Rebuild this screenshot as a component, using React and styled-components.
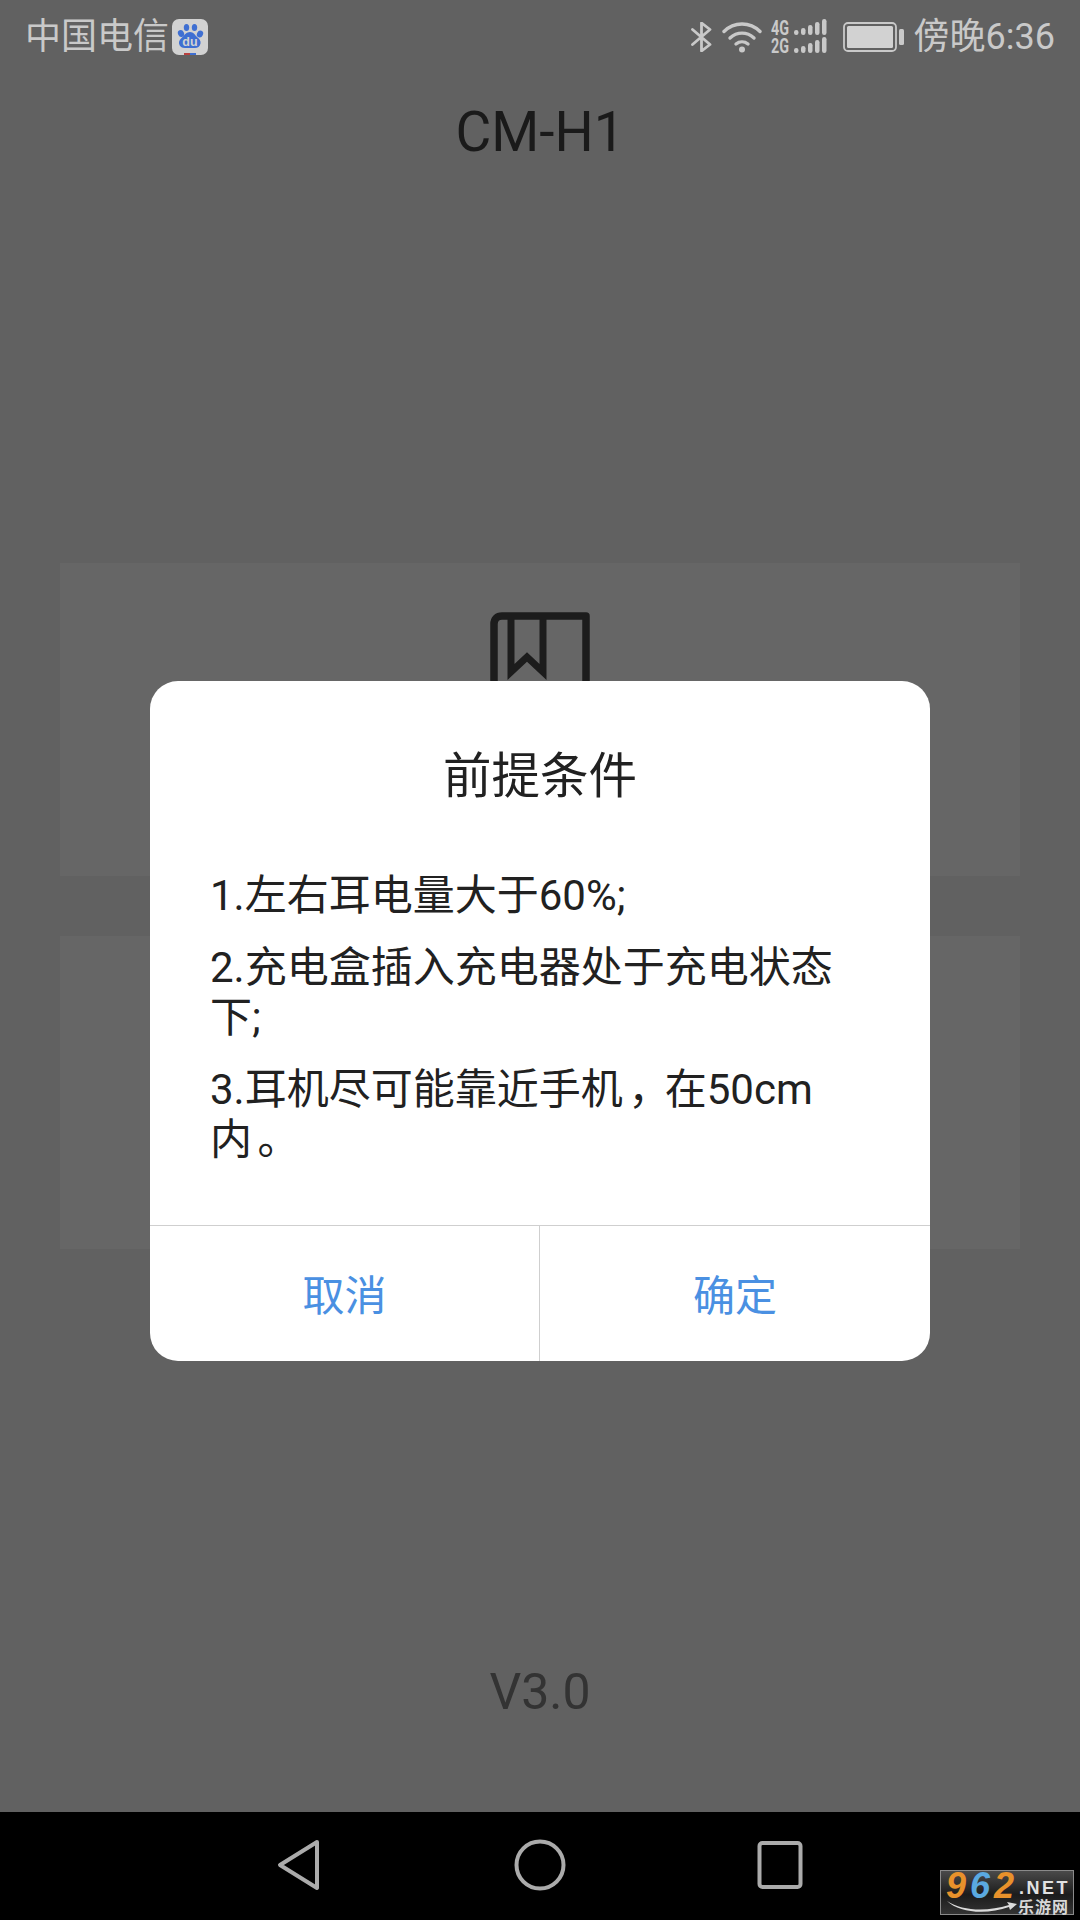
import styled, { createGlobalStyle } from 'styled-components';

const GlobalStyle = createGlobalStyle`
  html, body {
    margin: 0;
    padding: 0;
    background: #616161;
  }
  * {
    box-sizing: border-box;
  }
`;

const fontStack = `Roboto, "Noto Sans CJK SC", sans-serif`;

const Page = styled.div`
  position: relative;
  width: 1080px;
  height: 1920px;
  overflow: hidden;
  display: flex;
  flex-direction: column;
  background: #616161;
  font-family: ${fontStack};
`;

const StatusBar = styled.div`
  height: 72px;
  display: flex;
  align-items: center;
  justify-content: space-between;
  padding: 2px 25px 0 25px;
  color: #c9c9c9;
  font-size: 36px;
  flex-shrink: 0;
`;

const StatusGroup = styled.div`
  display: flex;
  align-items: center;
`;

const Carrier = styled.span`
  margin-right: 3px;
  line-height: 60px;
`;

const Clock = styled.span`
  margin-left: 10px;
  line-height: 60px;
`;

const StatusIcon = styled.svg`
  display: block;
  margin-left: ${(p) => p.$gap || 0}px;
`;

const Header = styled.h1`
  margin: 0;
  height: 118px;
  padding-top: 2px;
  display: flex;
  align-items: center;
  justify-content: center;
  font-size: 55px;
  font-weight: 400;
  color: #1a1a1a;
  flex-shrink: 0;
`;

const Main = styled.main`
  flex: 1;
  display: flex;
  flex-direction: column;
  align-items: center;
  padding: 373px 60px 0;
`;

const Card = styled.div`
  width: 100%;
  height: 313px;
  margin-bottom: 60px;
  padding-top: 49px;
  display: flex;
  justify-content: center;
  background: #666666;
`;

const Version = styled.div`
  margin-top: 60px;
  font-size: 50px;
  line-height: 60px;
  padding-top: 293px;
  color: #333333;
`;

const NavBar = styled.nav`
  height: 108px;
  flex-shrink: 0;
  background: #000;
  display: flex;
  align-items: flex-start;
  justify-content: center;
  padding-top: 27px;
`;

const NavButton = styled.svg`
  display: block;
  margin-left: ${(p) => p.$gap || 0}px;
`;

const Dialog = styled.section`
  position: absolute;
  left: 150px;
  top: 681px;
  width: 780px;
  height: 680px;
  border-radius: 28px;
  background: #fff;
  display: flex;
  flex-direction: column;
  overflow: hidden;
`;

const DialogTitle = styled.h2`
  margin: 0;
  padding-top: 66px;
  font-size: 48.5px;
  line-height: 60px;
  font-weight: 400;
  text-align: center;
  color: #212121;
`;

const DialogBody = styled.div`
  flex: 1;
  padding: 64px 58px 0 60px;
`;

const Line = styled.p`
  margin: 0 0 22px;
  font-size: 42px;
  line-height: 50px;
  color: #212121;
`;

// the reference sits its full-width punctuation further into the cell
const Punct = styled.span`
  padding-left: 5.5px;
  letter-spacing: -5.5px;
`;

const DialogActions = styled.div`
  height: 136px;
  display: grid;
  grid-template-columns: 389px 391px;
  border-top: 1px solid #cfcfcf;
`;

const ActionButton = styled.button`
  border: none;
  border-left: ${(p) => (p.$divided ? '1px solid #cfcfcf' : 'none')};
  background: transparent;
  padding: 0 0 2px;
  font-family: ${fontStack};
  font-size: 42px;
  color: #4a90e2;
`;

const Watermark = styled.div`
  position: absolute;
  left: 940px;
  top: 1870px;
  width: 134px;
  height: 45px;
  border: 1px solid #8a8a8a;
  background: linear-gradient(#4a4a4a, #1c1c1c 55%, #333);
`;

const MarkDigits = styled.span`
  position: absolute;
  left: 5px;
  top: 1px;
  font-family: "Liberation Sans", sans-serif;
  font-size: 36px;
  line-height: 28px;
  font-weight: 700;
  font-style: italic;
  letter-spacing: 4px;
`;

const MarkDigit = styled.span`
  color: ${(p) => p.$color};
`;

const MarkNet = styled.span`
  position: absolute;
  left: 78px;
  top: 8px;
  font-family: "Liberation Sans", sans-serif;
  font-size: 18px;
  line-height: 18px;
  font-weight: 700;
  letter-spacing: 2.5px;
  color: #e2e2e2;
`;

const MarkName = styled.span`
  position: absolute;
  left: 77px;
  top: 27px;
  font-family: "Noto Sans CJK SC", sans-serif;
  font-size: 16px;
  line-height: 16px;
  font-weight: 700;
  letter-spacing: 1px;
  color: #d8d8d8;
`;

const MarkSwoosh = styled.svg`
  position: absolute;
  left: 6px;
  top: 29px;
`;

const BaiduIcon = () => (
  <StatusIcon width="36" height="36" viewBox="0 0 36 36">
    <rect width="36" height="36" rx="7" fill="#d2d2d2" />
    <g fill="#3f6fd2">
      <ellipse cx="9" cy="14.5" rx="3" ry="3.6" transform="rotate(-25 9 14.5)" />
      <ellipse cx="14.5" cy="8.5" rx="2.7" ry="3.6" />
      <ellipse cx="22.5" cy="8.5" rx="2.7" ry="3.6" />
      <ellipse cx="28" cy="15" rx="3" ry="3.6" transform="rotate(25 28 15)" />
      <path d="M18 13c3.500 0 5 3 7 5 2.500 2 4 4 3.500 6.500-.5 3-3 4.500-5.500 4.500H13c-3 0-5.500-1.500-6-4.500C6.500 22 8.500 20 10.500 18c2-2 4-5 7.500-5z" />
    </g>
    <text x="18" y="27" textAnchor="middle" fontFamily="Liberation Sans, sans-serif" fontSize="12.500" fontWeight="700" fill="#d2d2d2">
      du
    </text>
    <rect x="12" y="34" width="6" height="2" fill="#b8403f" />
    <rect x="18" y="34" width="6" height="2" fill="#3f6fd2" />
  </StatusIcon>
);

const BluetoothIcon = () => (
  <StatusIcon width="22" height="30" viewBox="0 0 22 30">
    <path
      d="M1.500 7.500 19 22.500 10.500 29V1L19 7.500 1.500 22.500"
      fill="none"
      stroke="#c9c9c9"
      strokeWidth="2.800"
      strokeLinecap="round"
      strokeLinejoin="round"
    />
  </StatusIcon>
);

const WifiIcon = () => (
  <StatusIcon $gap={9} width="40" height="32" viewBox="0 0 40 32">
    <g fill="none" stroke="#c9c9c9" strokeWidth="3.400" strokeLinecap="round">
      <path d="M2 10.500C12 .5 28 .5 38 10.500" />
      <path d="M8 17c7-6.500 17-6.500 24 0" />
      <path d="M14 23c3.500-2.800 8.500-2.800 12 0" />
    </g>
    <circle cx="20" cy="28.500" r="3" fill="#c9c9c9" />
  </StatusIcon>
);

const signalBars = [
  [23, 5],
  [30, 7],
  [37, 10],
  [44, 13],
  [51, 16],
];

const SignalRow = ({ label, y }) => (
  <g>
    <text x="0" y={y + 15} fontFamily="Roboto, sans-serif" fontSize="20" fontWeight="700" fill="#c9c9c9" textLength="18" lengthAdjust="spacingAndGlyphs">
      {label}
    </text>
    {signalBars.map(([x, h]) => (
      <rect key={x} x={x} y={y + 15 - h} width="4.500" height={h} rx="2.200" fill="#c9c9c9" />
    ))}
  </g>
);

const SignalIcon = () => (
  <StatusIcon $gap={9} width="58" height="43" viewBox="0 -4 58 43">
    <SignalRow label="4G" y={0} />
    <SignalRow label="2G" y={18} />
  </StatusIcon>
);

const BatteryIcon = () => (
  <StatusIcon $gap={14} width="61" height="30" viewBox="0 0 61 30">
    <rect x="1" y="1" width="52" height="28" rx="4" fill="none" stroke="#c9c9c9" strokeWidth="1.800" />
    <rect x="4" y="4" width="46" height="22" rx="1.500" fill="#d2d2d2" />
    <rect x="56" y="7" width="5" height="16" rx="1.500" fill="#c9c9c9" />
  </StatusIcon>
);

const BookIcon = () => (
  <svg width="100" height="130" viewBox="0 0 100 130">
    <path
      d="M12 4H96V126H4V12C4 7 7 4 12 4Z"
      fill="none"
      stroke="#1c1c1c"
      strokeWidth="7.500"
      strokeLinejoin="round"
    />
    <path
      d="M21 6V60L37 45 53 60V6"
      fill="none"
      stroke="#1c1c1c"
      strokeWidth="7"
      strokeLinejoin="miter"
    />
  </svg>
);

function App() {
  return (
    <Page>
      <GlobalStyle />
      <StatusBar>
        <StatusGroup>
          <Carrier>中国电信</Carrier>
          <BaiduIcon />
        </StatusGroup>
        <StatusGroup>
          <BluetoothIcon />
          <WifiIcon />
          <SignalIcon />
          <BatteryIcon />
          <Clock>傍晚6:36</Clock>
        </StatusGroup>
      </StatusBar>
      <Header>CM-H1</Header>
      <Main>
        <Card>
          <BookIcon />
        </Card>
        <Card />
        <Version>V3.0</Version>
      </Main>
      <NavBar>
        <NavButton width="44" height="52" viewBox="0 0 44 52">
          <path d="M40 3 3 26 40 49Z" fill="none" stroke="#ababab" strokeWidth="4" strokeLinejoin="round" />
        </NavButton>
        <NavButton $gap={193} width="52" height="52" viewBox="0 0 52 52">
          <circle cx="26" cy="26" r="23.500" fill="none" stroke="#ababab" strokeWidth="4" />
        </NavButton>
        <NavButton $gap={190} width="48" height="52" viewBox="0 0 48 52">
          <rect x="3.500" y="4" width="41" height="44" rx="3" fill="none" stroke="#ababab" strokeWidth="4" />
        </NavButton>
      </NavBar>
      <Dialog>
        <DialogTitle>前提条件</DialogTitle>
        <DialogBody>
          <Line>1.左右耳电量大于60%;</Line>
          <Line>2.充电盒插入充电器处于充电状态下;</Line>
          <Line>
            3.耳机尽可能靠近手机<Punct>，</Punct>在50cm内<Punct>。</Punct>
          </Line>
        </DialogBody>
        <DialogActions>
          <ActionButton>取消</ActionButton>
          <ActionButton $divided>确定</ActionButton>
        </DialogActions>
      </Dialog>
      <Watermark>
        <MarkDigits>
          <MarkDigit $color="#e8912b">9</MarkDigit>
          <MarkDigit $color="#5aa9e0">6</MarkDigit>
          <MarkDigit $color="#e8912b">2</MarkDigit>
        </MarkDigits>
        <MarkNet>.NET</MarkNet>
        <MarkName>乐游网</MarkName>
        <MarkSwoosh width="70" height="14" viewBox="0 0 70 14">
          <path d="M0 1C15 11 40 12 62 5L60 2 70 4 63 10 62 7C40 15 12 13 0 1Z" fill="#dcdcdc" />
        </MarkSwoosh>
      </Watermark>
    </Page>
  );
}

export default App;
